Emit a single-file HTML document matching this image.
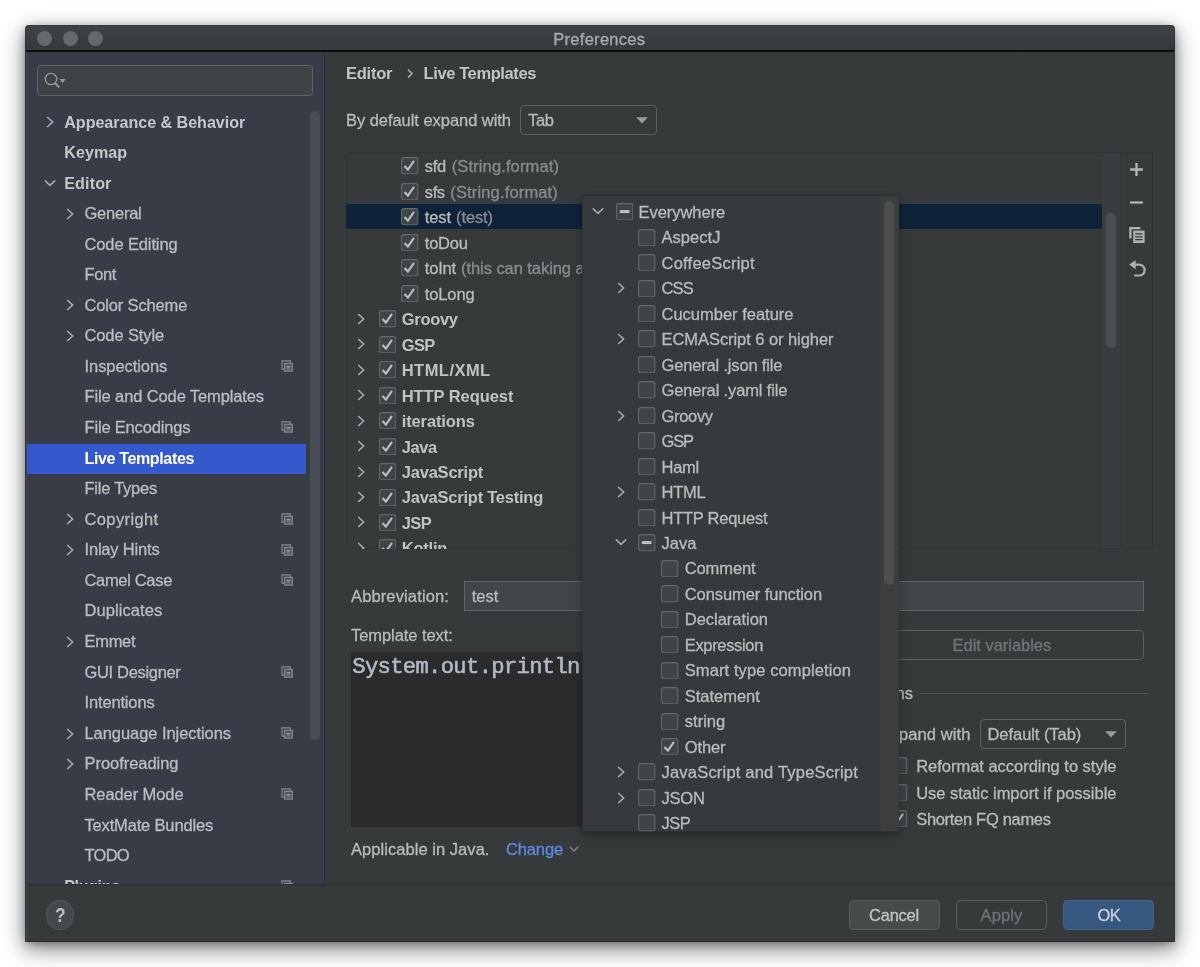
<!DOCTYPE html>
<html lang="en">
<head>
<meta charset="utf-8">
<title>Preferences</title>
<style>
html,body{margin:0;padding:0;background:#ffffff;}
body{width:1200px;height:967px;position:relative;overflow:hidden;font-family:"Liberation Sans",sans-serif;}
.abs{position:absolute;}
.layer{position:absolute;left:0;top:0;width:1200px;height:967px;will-change:transform;}
.t{position:absolute;white-space:pre;font-family:"Liberation Sans",sans-serif;-webkit-text-stroke:0.3px currentColor;}
#win{position:absolute;left:26px;top:26px;width:1148px;height:915px;background:#363a3b;border-radius:3px 3px 0 0;
  box-shadow:0 0 0 1px rgba(10,10,10,.75),0 7px 22px 2px rgba(0,0,0,.46),0 2px 9px rgba(0,0,0,.35);}
#titlebar{position:absolute;left:26px;top:26px;width:1148px;height:25px;background:linear-gradient(#3f4244,#36393b);border-radius:3px 3px 0 0;}
#titleline{position:absolute;left:26px;top:50.4px;width:1148px;height:1.6px;background:#0d0e0f;}
.tl{position:absolute;width:15px;height:15px;border-radius:50%;background:#65696b;top:30.6px;}
#sidebg{position:absolute;left:26px;top:52px;width:298px;height:832px;background:#393c46;}
#sideclip{clip-path:inset(52px 876px 83px 26px);}
#treeclip{clip-path:inset(153px 80px 418.5px 346px);}
#popclip{clip-path:inset(196px 301px 135.5px 583px);}
.field{position:absolute;box-sizing:border-box;border:1px solid #636567;border-radius:4px;}
.btn{position:absolute;box-sizing:border-box;border:1px solid #5e6162;border-radius:4.5px;}
</style>
</head>
<body>
<div id="win"></div>
<div id="titlebar"></div>
<div class="tl" style="left:36.9px"></div><div class="tl" style="left:62.5px"></div><div class="tl" style="left:88.1px"></div>
<div id="titleline"></div>
<div class="layer">
<span class="t" style="left:553.30px;top:28.58px;line-height:21px;font-size:16.5px;color:#a9abad;letter-spacing:0.276px;">Preferences</span></div>

<!-- sidebar -->
<div id="sidebg"></div>
<div class="abs" style="left:26px;top:52px;width:1px;height:889px;background:#55595f;opacity:.55"></div>
<div class="abs" style="left:323.6px;top:52px;width:1.3px;height:832px;background:#2c2f33"></div>
<div class="field" style="left:37px;top:65px;width:276px;height:30.6px;background:#404345;border-color:#5f646b;border-radius:3.5px"></div>
<svg class="abs" style="left:42px;top:70px" width="26" height="20" viewBox="0 0 26 20">
  <circle cx="9" cy="9" r="5.7" fill="none" stroke="#989b9e" stroke-width="1.3"/>
  <path d="M13.1 13.3 L17.2 17.2" stroke="#989b9e" stroke-width="2"/>
  <path d="M17.4 9 h6.4 l-3.2 4.1 z" fill="#989b9e"/>
</svg>
<div class="layer" id="sideclip">
<svg style="position:absolute;left:45.20px;top:114.90px" width="10" height="14" viewBox="0 0 10 14"><path d="M2.2 2 L7.6 7 L2.2 12" fill="none" stroke="#a4a7ab" stroke-width="1.7"/></svg>
<svg style="position:absolute;left:43.20px;top:177.56px" width="14" height="10" viewBox="0 0 14 10"><path d="M1.8 2.4 L7 7.4 L12.2 2.4" fill="none" stroke="#a4a7ab" stroke-width="1.7"/></svg>
<svg style="position:absolute;left:65.40px;top:206.64px" width="10" height="14" viewBox="0 0 10 14"><path d="M2.2 2 L7.6 7 L2.2 12" fill="none" stroke="#a4a7ab" stroke-width="1.7"/></svg>
<svg style="position:absolute;left:65.40px;top:298.38px" width="10" height="14" viewBox="0 0 10 14"><path d="M2.2 2 L7.6 7 L2.2 12" fill="none" stroke="#a4a7ab" stroke-width="1.7"/></svg>
<svg style="position:absolute;left:65.40px;top:328.96px" width="10" height="14" viewBox="0 0 10 14"><path d="M2.2 2 L7.6 7 L2.2 12" fill="none" stroke="#a4a7ab" stroke-width="1.7"/></svg>
<svg style="position:absolute;left:280.70px;top:360.04px" width="13" height="13" viewBox="0 0 13 13"><path d="M9.2 3.2 V0.9 H1 V9.1 H3.3" fill="none" stroke="#878c94" stroke-width="1.15"/><rect x="3.6" y="3.3" width="7.7" height="7.8" fill="#878c94" fill-opacity="0.3" stroke="#878c94" stroke-width="1.2"/><path d="M5.5 6.8 H9.5" stroke="#aeb3ba" stroke-width="1.15"/><path d="M5.8 8.9 H9.2" stroke="#878c94" stroke-width="0.9"/></svg>
<svg style="position:absolute;left:280.70px;top:421.20px" width="13" height="13" viewBox="0 0 13 13"><path d="M9.2 3.2 V0.9 H1 V9.1 H3.3" fill="none" stroke="#878c94" stroke-width="1.15"/><rect x="3.6" y="3.3" width="7.7" height="7.8" fill="#878c94" fill-opacity="0.3" stroke="#878c94" stroke-width="1.2"/><path d="M5.5 6.8 H9.5" stroke="#aeb3ba" stroke-width="1.15"/><path d="M5.8 8.9 H9.2" stroke="#878c94" stroke-width="0.9"/></svg>
<div style="position:absolute;left:27px;top:443.78px;width:279px;height:30.4px;background:#3359cd"></div>
<svg style="position:absolute;left:65.40px;top:512.44px" width="10" height="14" viewBox="0 0 10 14"><path d="M2.2 2 L7.6 7 L2.2 12" fill="none" stroke="#a4a7ab" stroke-width="1.7"/></svg>
<svg style="position:absolute;left:280.70px;top:512.94px" width="13" height="13" viewBox="0 0 13 13"><path d="M9.2 3.2 V0.9 H1 V9.1 H3.3" fill="none" stroke="#878c94" stroke-width="1.15"/><rect x="3.6" y="3.3" width="7.7" height="7.8" fill="#878c94" fill-opacity="0.3" stroke="#878c94" stroke-width="1.2"/><path d="M5.5 6.8 H9.5" stroke="#aeb3ba" stroke-width="1.15"/><path d="M5.8 8.9 H9.2" stroke="#878c94" stroke-width="0.9"/></svg>
<svg style="position:absolute;left:65.40px;top:543.02px" width="10" height="14" viewBox="0 0 10 14"><path d="M2.2 2 L7.6 7 L2.2 12" fill="none" stroke="#a4a7ab" stroke-width="1.7"/></svg>
<svg style="position:absolute;left:280.70px;top:543.52px" width="13" height="13" viewBox="0 0 13 13"><path d="M9.2 3.2 V0.9 H1 V9.1 H3.3" fill="none" stroke="#878c94" stroke-width="1.15"/><rect x="3.6" y="3.3" width="7.7" height="7.8" fill="#878c94" fill-opacity="0.3" stroke="#878c94" stroke-width="1.2"/><path d="M5.5 6.8 H9.5" stroke="#aeb3ba" stroke-width="1.15"/><path d="M5.8 8.9 H9.2" stroke="#878c94" stroke-width="0.9"/></svg>
<svg style="position:absolute;left:280.70px;top:574.10px" width="13" height="13" viewBox="0 0 13 13"><path d="M9.2 3.2 V0.9 H1 V9.1 H3.3" fill="none" stroke="#878c94" stroke-width="1.15"/><rect x="3.6" y="3.3" width="7.7" height="7.8" fill="#878c94" fill-opacity="0.3" stroke="#878c94" stroke-width="1.2"/><path d="M5.5 6.8 H9.5" stroke="#aeb3ba" stroke-width="1.15"/><path d="M5.8 8.9 H9.2" stroke="#878c94" stroke-width="0.9"/></svg>
<svg style="position:absolute;left:65.40px;top:634.76px" width="10" height="14" viewBox="0 0 10 14"><path d="M2.2 2 L7.6 7 L2.2 12" fill="none" stroke="#a4a7ab" stroke-width="1.7"/></svg>
<svg style="position:absolute;left:280.70px;top:665.84px" width="13" height="13" viewBox="0 0 13 13"><path d="M9.2 3.2 V0.9 H1 V9.1 H3.3" fill="none" stroke="#878c94" stroke-width="1.15"/><rect x="3.6" y="3.3" width="7.7" height="7.8" fill="#878c94" fill-opacity="0.3" stroke="#878c94" stroke-width="1.2"/><path d="M5.5 6.8 H9.5" stroke="#aeb3ba" stroke-width="1.15"/><path d="M5.8 8.9 H9.2" stroke="#878c94" stroke-width="0.9"/></svg>
<svg style="position:absolute;left:65.40px;top:726.50px" width="10" height="14" viewBox="0 0 10 14"><path d="M2.2 2 L7.6 7 L2.2 12" fill="none" stroke="#a4a7ab" stroke-width="1.7"/></svg>
<svg style="position:absolute;left:280.70px;top:727.00px" width="13" height="13" viewBox="0 0 13 13"><path d="M9.2 3.2 V0.9 H1 V9.1 H3.3" fill="none" stroke="#878c94" stroke-width="1.15"/><rect x="3.6" y="3.3" width="7.7" height="7.8" fill="#878c94" fill-opacity="0.3" stroke="#878c94" stroke-width="1.2"/><path d="M5.5 6.8 H9.5" stroke="#aeb3ba" stroke-width="1.15"/><path d="M5.8 8.9 H9.2" stroke="#878c94" stroke-width="0.9"/></svg>
<svg style="position:absolute;left:65.40px;top:757.08px" width="10" height="14" viewBox="0 0 10 14"><path d="M2.2 2 L7.6 7 L2.2 12" fill="none" stroke="#a4a7ab" stroke-width="1.7"/></svg>
<svg style="position:absolute;left:280.70px;top:788.16px" width="13" height="13" viewBox="0 0 13 13"><path d="M9.2 3.2 V0.9 H1 V9.1 H3.3" fill="none" stroke="#878c94" stroke-width="1.15"/><rect x="3.6" y="3.3" width="7.7" height="7.8" fill="#878c94" fill-opacity="0.3" stroke="#878c94" stroke-width="1.2"/><path d="M5.5 6.8 H9.5" stroke="#aeb3ba" stroke-width="1.15"/><path d="M5.8 8.9 H9.2" stroke="#878c94" stroke-width="0.9"/></svg>
<svg style="position:absolute;left:280.70px;top:879.90px" width="13" height="13" viewBox="0 0 13 13"><path d="M9.2 3.2 V0.9 H1 V9.1 H3.3" fill="none" stroke="#878c94" stroke-width="1.15"/><rect x="3.6" y="3.3" width="7.7" height="7.8" fill="#878c94" fill-opacity="0.3" stroke="#878c94" stroke-width="1.2"/><path d="M5.5 6.8 H9.5" stroke="#aeb3ba" stroke-width="1.15"/><path d="M5.8 8.9 H9.2" stroke="#878c94" stroke-width="0.9"/></svg>
<span class="t" style="left:64.25px;top:111.72px;line-height:21px;font-size:16.1px;color:#c4c6c9;letter-spacing:-0.028px;font-weight:bold;-webkit-text-stroke:0;">Appearance &amp; Behavior</span>
<span class="t" style="left:64.25px;top:142.30px;line-height:21px;font-size:16.1px;color:#c4c6c9;letter-spacing:0.062px;font-weight:bold;-webkit-text-stroke:0;">Keymap</span>
<span class="t" style="left:64.25px;top:172.88px;line-height:21px;font-size:16.1px;color:#c4c6c9;letter-spacing:0.125px;font-weight:bold;-webkit-text-stroke:0;">Editor</span>
<span class="t" style="left:84.50px;top:202.92px;line-height:21px;font-size:16.5px;color:#bbbdc0;letter-spacing:-0.243px;">General</span>
<span class="t" style="left:84.50px;top:233.50px;line-height:21px;font-size:16.5px;color:#bbbdc0;letter-spacing:-0.124px;">Code Editing</span>
<span class="t" style="left:84.50px;top:264.08px;line-height:21px;font-size:16.5px;color:#bbbdc0;letter-spacing:-0.383px;">Font</span>
<span class="t" style="left:84.50px;top:294.66px;line-height:21px;font-size:16.5px;color:#bbbdc0;letter-spacing:-0.150px;">Color Scheme</span>
<span class="t" style="left:84.50px;top:325.24px;line-height:21px;font-size:16.5px;color:#bbbdc0;letter-spacing:-0.122px;">Code Style</span>
<span class="t" style="left:84.50px;top:355.82px;line-height:21px;font-size:16.5px;color:#bbbdc0;letter-spacing:-0.065px;">Inspections</span>
<span class="t" style="left:84.50px;top:386.40px;line-height:21px;font-size:16.5px;color:#bbbdc0;letter-spacing:-0.118px;">File and Code Templates</span>
<span class="t" style="left:84.50px;top:416.98px;line-height:21px;font-size:16.5px;color:#bbbdc0;letter-spacing:-0.177px;">File Encodings</span>
<span class="t" style="left:84.50px;top:448.10px;line-height:21px;font-size:16.1px;color:#ffffff;letter-spacing:-0.400px;font-weight:bold;-webkit-text-stroke:0;">Live Templates</span>
<span class="t" style="left:84.50px;top:478.14px;line-height:21px;font-size:16.5px;color:#bbbdc0;letter-spacing:-0.241px;">File Types</span>
<span class="t" style="left:84.50px;top:508.72px;line-height:21px;font-size:16.5px;color:#bbbdc0;letter-spacing:0.375px;">Copyright</span>
<span class="t" style="left:84.50px;top:539.30px;line-height:21px;font-size:16.5px;color:#bbbdc0;letter-spacing:-0.185px;">Inlay Hints</span>
<span class="t" style="left:84.50px;top:569.88px;line-height:21px;font-size:16.5px;color:#bbbdc0;letter-spacing:-0.330px;">Camel Case</span>
<span class="t" style="left:84.50px;top:600.46px;line-height:21px;font-size:16.5px;color:#bbbdc0;letter-spacing:0.070px;">Duplicates</span>
<span class="t" style="left:84.50px;top:631.04px;line-height:21px;font-size:16.5px;color:#bbbdc0;letter-spacing:-0.303px;">Emmet</span>
<span class="t" style="left:84.50px;top:661.62px;line-height:21px;font-size:16.5px;color:#bbbdc0;letter-spacing:-0.329px;">GUI Designer</span>
<span class="t" style="left:84.50px;top:692.20px;line-height:21px;font-size:16.5px;color:#bbbdc0;letter-spacing:-0.156px;">Intentions</span>
<span class="t" style="left:84.50px;top:722.78px;line-height:21px;font-size:16.5px;color:#bbbdc0;letter-spacing:-0.063px;">Language Injections</span>
<span class="t" style="left:84.50px;top:753.36px;line-height:21px;font-size:16.5px;color:#bbbdc0;letter-spacing:-0.040px;">Proofreading</span>
<span class="t" style="left:84.50px;top:783.94px;line-height:21px;font-size:16.5px;color:#bbbdc0;letter-spacing:-0.089px;">Reader Mode</span>
<span class="t" style="left:84.50px;top:814.52px;line-height:21px;font-size:16.5px;color:#bbbdc0;letter-spacing:-0.166px;">TextMate Bundles</span>
<span class="t" style="left:84.50px;top:845.10px;line-height:21px;font-size:16.5px;color:#bbbdc0;letter-spacing:-0.719px;">TODO</span>
<span class="t" style="left:64.25px;top:876.22px;line-height:21px;font-size:16.1px;color:#c4c6c9;letter-spacing:-0.375px;font-weight:bold;-webkit-text-stroke:0;">Plugins</span>
</div>
<div class="abs" style="left:309.5px;top:111px;width:10.5px;height:628.5px;border-radius:5px;background:#494d56"></div>

<!-- main -->
<svg class="abs" style="left:404px;top:66px" width="12" height="16" viewBox="0 0 12 16"><path d="M4 3.6 L8 7.6 L4 11.6" fill="none" stroke="#a4a7ab" stroke-width="1.5"/></svg>
<div class="field" style="left:520px;top:105px;width:136.7px;height:29.7px;border-color:#5e6162"></div>
<svg class="abs" style="left:636.4px;top:117.4px" width="12" height="7" viewBox="0 0 12 7"><path d="M0.2 0.2 H11.8 L6 6.6 Z" fill="#9a9da0"/></svg>

<!-- tree table -->
<div class="abs" style="left:345.5px;top:152.3px;width:807.4px;height:396.7px;box-sizing:border-box;border:1px solid #313335"></div>
<div class="abs" style="left:1102px;top:153.3px;width:18px;height:394.7px;background:#3a3d3f"></div>
<div class="layer" id="treeclip">
<svg style="position:absolute;left:401.40px;top:157.40px" width="17.4" height="17.4" viewBox="0 0 17.4 17.4"><rect x="0.6" y="0.6" width="16.2" height="16.2" rx="2.2" fill="#3f4446" stroke="#656869" stroke-width="1.1"/><path d="M3.5 8.9 L6.9 12.5 L13 3.8" fill="none" stroke="#bcbfbf" stroke-width="2.15"/></svg>
<svg style="position:absolute;left:401.40px;top:182.87px" width="17.4" height="17.4" viewBox="0 0 17.4 17.4"><rect x="0.6" y="0.6" width="16.2" height="16.2" rx="2.2" fill="#3f4446" stroke="#656869" stroke-width="1.1"/><path d="M3.5 8.9 L6.9 12.5 L13 3.8" fill="none" stroke="#bcbfbf" stroke-width="2.15"/></svg>
<div style="position:absolute;left:346px;top:203.94px;width:756px;height:25.2px;background:#0e2239"></div>
<svg style="position:absolute;left:401.40px;top:208.34px" width="17.4" height="17.4" viewBox="0 0 17.4 17.4"><rect x="0.6" y="0.6" width="16.2" height="16.2" rx="2.2" fill="#3f4446" stroke="#656869" stroke-width="1.1"/><path d="M3.5 8.9 L6.9 12.5 L13 3.8" fill="none" stroke="#bcbfbf" stroke-width="2.15"/></svg>
<svg style="position:absolute;left:401.40px;top:233.81px" width="17.4" height="17.4" viewBox="0 0 17.4 17.4"><rect x="0.6" y="0.6" width="16.2" height="16.2" rx="2.2" fill="#3f4446" stroke="#656869" stroke-width="1.1"/><path d="M3.5 8.9 L6.9 12.5 L13 3.8" fill="none" stroke="#bcbfbf" stroke-width="2.15"/></svg>
<svg style="position:absolute;left:401.40px;top:259.28px" width="17.4" height="17.4" viewBox="0 0 17.4 17.4"><rect x="0.6" y="0.6" width="16.2" height="16.2" rx="2.2" fill="#3f4446" stroke="#656869" stroke-width="1.1"/><path d="M3.5 8.9 L6.9 12.5 L13 3.8" fill="none" stroke="#bcbfbf" stroke-width="2.15"/></svg>
<svg style="position:absolute;left:401.40px;top:284.75px" width="17.4" height="17.4" viewBox="0 0 17.4 17.4"><rect x="0.6" y="0.6" width="16.2" height="16.2" rx="2.2" fill="#3f4446" stroke="#656869" stroke-width="1.1"/><path d="M3.5 8.9 L6.9 12.5 L13 3.8" fill="none" stroke="#bcbfbf" stroke-width="2.15"/></svg>
<svg style="position:absolute;left:356.00px;top:311.72px" width="10" height="14" viewBox="0 0 10 14"><path d="M2.2 2 L7.6 7 L2.2 12" fill="none" stroke="#a4a7ab" stroke-width="1.7"/></svg>
<svg style="position:absolute;left:378.50px;top:310.22px" width="17.4" height="17.4" viewBox="0 0 17.4 17.4"><rect x="0.6" y="0.6" width="16.2" height="16.2" rx="2.2" fill="#3f4446" stroke="#656869" stroke-width="1.1"/><path d="M3.5 8.9 L6.9 12.5 L13 3.8" fill="none" stroke="#bcbfbf" stroke-width="2.15"/></svg>
<svg style="position:absolute;left:356.00px;top:337.19px" width="10" height="14" viewBox="0 0 10 14"><path d="M2.2 2 L7.6 7 L2.2 12" fill="none" stroke="#a4a7ab" stroke-width="1.7"/></svg>
<svg style="position:absolute;left:378.50px;top:335.69px" width="17.4" height="17.4" viewBox="0 0 17.4 17.4"><rect x="0.6" y="0.6" width="16.2" height="16.2" rx="2.2" fill="#3f4446" stroke="#656869" stroke-width="1.1"/><path d="M3.5 8.9 L6.9 12.5 L13 3.8" fill="none" stroke="#bcbfbf" stroke-width="2.15"/></svg>
<svg style="position:absolute;left:356.00px;top:362.66px" width="10" height="14" viewBox="0 0 10 14"><path d="M2.2 2 L7.6 7 L2.2 12" fill="none" stroke="#a4a7ab" stroke-width="1.7"/></svg>
<svg style="position:absolute;left:378.50px;top:361.16px" width="17.4" height="17.4" viewBox="0 0 17.4 17.4"><rect x="0.6" y="0.6" width="16.2" height="16.2" rx="2.2" fill="#3f4446" stroke="#656869" stroke-width="1.1"/><path d="M3.5 8.9 L6.9 12.5 L13 3.8" fill="none" stroke="#bcbfbf" stroke-width="2.15"/></svg>
<svg style="position:absolute;left:356.00px;top:388.13px" width="10" height="14" viewBox="0 0 10 14"><path d="M2.2 2 L7.6 7 L2.2 12" fill="none" stroke="#a4a7ab" stroke-width="1.7"/></svg>
<svg style="position:absolute;left:378.50px;top:386.63px" width="17.4" height="17.4" viewBox="0 0 17.4 17.4"><rect x="0.6" y="0.6" width="16.2" height="16.2" rx="2.2" fill="#3f4446" stroke="#656869" stroke-width="1.1"/><path d="M3.5 8.9 L6.9 12.5 L13 3.8" fill="none" stroke="#bcbfbf" stroke-width="2.15"/></svg>
<svg style="position:absolute;left:356.00px;top:413.60px" width="10" height="14" viewBox="0 0 10 14"><path d="M2.2 2 L7.6 7 L2.2 12" fill="none" stroke="#a4a7ab" stroke-width="1.7"/></svg>
<svg style="position:absolute;left:378.50px;top:412.10px" width="17.4" height="17.4" viewBox="0 0 17.4 17.4"><rect x="0.6" y="0.6" width="16.2" height="16.2" rx="2.2" fill="#3f4446" stroke="#656869" stroke-width="1.1"/><path d="M3.5 8.9 L6.9 12.5 L13 3.8" fill="none" stroke="#bcbfbf" stroke-width="2.15"/></svg>
<svg style="position:absolute;left:356.00px;top:439.07px" width="10" height="14" viewBox="0 0 10 14"><path d="M2.2 2 L7.6 7 L2.2 12" fill="none" stroke="#a4a7ab" stroke-width="1.7"/></svg>
<svg style="position:absolute;left:378.50px;top:437.57px" width="17.4" height="17.4" viewBox="0 0 17.4 17.4"><rect x="0.6" y="0.6" width="16.2" height="16.2" rx="2.2" fill="#3f4446" stroke="#656869" stroke-width="1.1"/><path d="M3.5 8.9 L6.9 12.5 L13 3.8" fill="none" stroke="#bcbfbf" stroke-width="2.15"/></svg>
<svg style="position:absolute;left:356.00px;top:464.54px" width="10" height="14" viewBox="0 0 10 14"><path d="M2.2 2 L7.6 7 L2.2 12" fill="none" stroke="#a4a7ab" stroke-width="1.7"/></svg>
<svg style="position:absolute;left:378.50px;top:463.04px" width="17.4" height="17.4" viewBox="0 0 17.4 17.4"><rect x="0.6" y="0.6" width="16.2" height="16.2" rx="2.2" fill="#3f4446" stroke="#656869" stroke-width="1.1"/><path d="M3.5 8.9 L6.9 12.5 L13 3.8" fill="none" stroke="#bcbfbf" stroke-width="2.15"/></svg>
<svg style="position:absolute;left:356.00px;top:490.01px" width="10" height="14" viewBox="0 0 10 14"><path d="M2.2 2 L7.6 7 L2.2 12" fill="none" stroke="#a4a7ab" stroke-width="1.7"/></svg>
<svg style="position:absolute;left:378.50px;top:488.51px" width="17.4" height="17.4" viewBox="0 0 17.4 17.4"><rect x="0.6" y="0.6" width="16.2" height="16.2" rx="2.2" fill="#3f4446" stroke="#656869" stroke-width="1.1"/><path d="M3.5 8.9 L6.9 12.5 L13 3.8" fill="none" stroke="#bcbfbf" stroke-width="2.15"/></svg>
<svg style="position:absolute;left:356.00px;top:515.48px" width="10" height="14" viewBox="0 0 10 14"><path d="M2.2 2 L7.6 7 L2.2 12" fill="none" stroke="#a4a7ab" stroke-width="1.7"/></svg>
<svg style="position:absolute;left:378.50px;top:513.98px" width="17.4" height="17.4" viewBox="0 0 17.4 17.4"><rect x="0.6" y="0.6" width="16.2" height="16.2" rx="2.2" fill="#3f4446" stroke="#656869" stroke-width="1.1"/><path d="M3.5 8.9 L6.9 12.5 L13 3.8" fill="none" stroke="#bcbfbf" stroke-width="2.15"/></svg>
<svg style="position:absolute;left:356.00px;top:540.95px" width="10" height="14" viewBox="0 0 10 14"><path d="M2.2 2 L7.6 7 L2.2 12" fill="none" stroke="#a4a7ab" stroke-width="1.7"/></svg>
<svg style="position:absolute;left:378.50px;top:539.45px" width="17.4" height="17.4" viewBox="0 0 17.4 17.4"><rect x="0.6" y="0.6" width="16.2" height="16.2" rx="2.2" fill="#3f4446" stroke="#656869" stroke-width="1.1"/><path d="M3.5 8.9 L6.9 12.5 L13 3.8" fill="none" stroke="#bcbfbf" stroke-width="2.15"/></svg>
<span class="t" style="left:424.75px;top:156.38px;line-height:21px;font-size:16.5px;color:#bbbbbb;letter-spacing:-0.255px;">sfd</span>
<span class="t" style="left:451.75px;top:156.38px;line-height:21px;font-size:16.5px;color:#8a8c8e;letter-spacing:0.121px;">(String.format)</span>
<span class="t" style="left:424.75px;top:181.85px;line-height:21px;font-size:16.5px;color:#bbbbbb;letter-spacing:-0.365px;">sfs</span>
<span class="t" style="left:450.25px;top:181.85px;line-height:21px;font-size:16.5px;color:#8a8c8e;letter-spacing:0.154px;">(String.format)</span>
<span class="t" style="left:424.75px;top:207.32px;line-height:21px;font-size:16.5px;color:#bbbbbb;letter-spacing:-0.090px;">test</span>
<span class="t" style="left:456.00px;top:207.32px;line-height:21px;font-size:16.5px;color:#8a8c8e;letter-spacing:-0.099px;">(test)</span>
<span class="t" style="left:424.75px;top:232.79px;line-height:21px;font-size:16.5px;color:#bbbbbb;letter-spacing:-0.206px;">toDou</span>
<span class="t" style="left:424.75px;top:258.26px;line-height:21px;font-size:16.5px;color:#bbbbbb;letter-spacing:-0.172px;">toInt</span>
<span class="t" style="left:461.00px;top:258.26px;line-height:21px;font-size:16.5px;color:#8a8c8e;letter-spacing:-0.062px;">(this can taking a parameter)</span>
<span class="t" style="left:424.75px;top:283.73px;line-height:21px;font-size:16.5px;color:#bbbbbb;letter-spacing:-0.111px;">toLong</span>
<span class="t" style="left:401.75px;top:309.20px;line-height:21px;font-size:16.5px;color:#c2c2c2;letter-spacing:-0.297px;font-weight:bold;-webkit-text-stroke:0;">Groovy</span>
<span class="t" style="left:401.75px;top:334.67px;line-height:21px;font-size:16.5px;color:#c2c2c2;letter-spacing:-0.620px;font-weight:bold;-webkit-text-stroke:0;">GSP</span>
<span class="t" style="left:401.75px;top:360.14px;line-height:21px;font-size:16.5px;color:#c2c2c2;letter-spacing:0.458px;font-weight:bold;-webkit-text-stroke:0;">HTML/XML</span>
<span class="t" style="left:401.75px;top:385.61px;line-height:21px;font-size:16.5px;color:#c2c2c2;letter-spacing:-0.072px;font-weight:bold;-webkit-text-stroke:0;">HTTP Request</span>
<span class="t" style="left:401.75px;top:411.08px;line-height:21px;font-size:16.5px;color:#c2c2c2;letter-spacing:-0.128px;font-weight:bold;-webkit-text-stroke:0;">iterations</span>
<span class="t" style="left:401.75px;top:436.55px;line-height:21px;font-size:16.5px;color:#c2c2c2;letter-spacing:-0.405px;font-weight:bold;-webkit-text-stroke:0;">Java</span>
<span class="t" style="left:401.75px;top:462.02px;line-height:21px;font-size:16.5px;color:#c2c2c2;letter-spacing:-0.217px;font-weight:bold;-webkit-text-stroke:0;">JavaScript</span>
<span class="t" style="left:401.75px;top:487.49px;line-height:21px;font-size:16.5px;color:#c2c2c2;letter-spacing:-0.233px;font-weight:bold;-webkit-text-stroke:0;">JavaScript Testing</span>
<span class="t" style="left:401.75px;top:512.96px;line-height:21px;font-size:16.5px;color:#c2c2c2;letter-spacing:-0.562px;font-weight:bold;-webkit-text-stroke:0;">JSP</span>
<span class="t" style="left:401.75px;top:538.43px;line-height:21px;font-size:16.5px;color:#c2c2c2;letter-spacing:-0.208px;font-weight:bold;-webkit-text-stroke:0;">Kotlin</span>
</div>
<div class="abs" style="left:1120px;top:153px;width:1px;height:395.5px;background:#323435"></div>
<div class="abs" style="left:1106px;top:212.5px;width:10px;height:135px;border-radius:5px;background:#4d4e50"></div>
<!-- toolbar icons -->
<svg class="abs" style="left:1128px;top:161px" width="17" height="17" viewBox="0 0 17 17"><path d="M8.5 2.1 V14.9 M2.1 8.5 H14.9" stroke="#b4b6b8" stroke-width="2.3"/></svg>
<svg class="abs" style="left:1128px;top:194px" width="17" height="17" viewBox="0 0 17 17"><path d="M2.1 8.5 H14.9" stroke="#b4b6b8" stroke-width="2.3"/></svg>
<svg class="abs" style="left:1127.5px;top:226px" width="19" height="19" viewBox="0 0 19 19">
  <path d="M2.4 12.6 V2.1 H12.4" fill="none" stroke="#afb1b3" stroke-width="2.3"/>
  <rect x="5.2" y="4.6" width="11.4" height="12.4" fill="#afb1b3"/>
  <path d="M7.2 7.9 H14.6 M7.2 10.8 H14.6 M7.2 13.7 H14.6" stroke="#363a3b" stroke-width="1.3"/>
</svg>
<svg class="abs" style="left:1127.5px;top:260px" width="20" height="20" viewBox="0 0 20 20">
  <path d="M6.5 4.6 H11.2 A5.45 5.45 0 0 1 11.2 15.5 H6.2" fill="none" stroke="#afb1b3" stroke-width="2.2"/>
  <path d="M7.6 0.2 L1.2 4.6 L7.6 9.2 Z" fill="#afb1b3"/>
</svg>

<!-- lower form -->
<div class="field" style="left:464px;top:581.2px;width:679.8px;height:30px;background:#424648;border-radius:0;border-color:#606365"></div>
<div class="abs" style="left:350.5px;top:651.7px;width:497px;height:175.8px;background:#2b2b2b"></div>
<div class="btn" style="left:860px;top:630px;width:283.8px;height:29.6px"></div>
<div class="abs" style="left:920px;top:693.4px;width:227.5px;height:1px;background:#4f5254"></div>
<div class="field" style="left:980px;top:718.7px;width:145.5px;height:30.2px;border-color:#5e6162"></div>
<svg class="abs" style="left:1105px;top:731.2px" width="12" height="7" viewBox="0 0 12 7"><path d="M0.2 0.2 H11.8 L6 6.6 Z" fill="#9a9da0"/></svg>
<svg style="position:absolute;left:890.20px;top:757.10px" width="17.4" height="17.4" viewBox="0 0 17.4 17.4"><rect x="0.6" y="0.6" width="16.2" height="16.2" rx="2.2" fill="#3f4446" stroke="#656869" stroke-width="1.1"/></svg><svg style="position:absolute;left:890.20px;top:783.70px" width="17.4" height="17.4" viewBox="0 0 17.4 17.4"><rect x="0.6" y="0.6" width="16.2" height="16.2" rx="2.2" fill="#3f4446" stroke="#656869" stroke-width="1.1"/></svg><svg style="position:absolute;left:890.20px;top:810.10px" width="17.4" height="17.4" viewBox="0 0 17.4 17.4"><rect x="0.6" y="0.6" width="16.2" height="16.2" rx="2.2" fill="#3f4446" stroke="#656869" stroke-width="1.1"/><path d="M3.5 8.9 L6.9 12.5 L13 3.8" fill="none" stroke="#bcbfbf" stroke-width="2.15"/></svg>
<svg class="abs" style="left:566.5px;top:844px" width="14" height="10" viewBox="0 0 14 10"><path d="M2.8 2.8 L7 7 L11.2 2.8" fill="none" stroke="#7c828c" stroke-width="1.5"/></svg>

<!-- footer -->
<div class="abs" style="left:27px;top:884px;width:1147px;height:57px;background:#363a3b"></div>
<div class="abs" style="left:27px;top:884px;width:1147px;height:1.2px;background:#2c2f30"></div>
<div class="abs" style="left:45.8px;top:900.2px;width:28.4px;height:29.6px;border-radius:50%;background:#46494b;box-sizing:border-box;border:1px solid #54575a"></div>
<span class="t" style="left:54.7px;top:901.8px;line-height:26px;font-size:20px;font-weight:bold;color:#c2c2c2;-webkit-text-stroke:0;transform:scaleX(.86);transform-origin:0 0;will-change:transform">?</span>
<div class="btn" style="left:848.5px;top:900px;width:91px;height:29.6px;background:#464a4b;border-color:#5a5d5f"></div>
<div class="btn" style="left:955.5px;top:900px;width:91.2px;height:29.6px;border-color:#5a5d5f"></div>
<div class="btn" style="left:1062.5px;top:900px;width:91.5px;height:29.6px;background:#365880;border-color:#43638c"></div>
<div class="layer">
<span class="t" style="left:346.00px;top:63.48px;line-height:21px;font-size:16.5px;color:#c4c4c4;letter-spacing:-0.237px;font-weight:bold;-webkit-text-stroke:0;">Editor</span>
<span class="t" style="left:423.50px;top:63.48px;line-height:21px;font-size:16.5px;color:#c4c4c4;letter-spacing:-0.393px;font-weight:bold;-webkit-text-stroke:0;">Live Templates</span>
<span class="t" style="left:346.00px;top:110.48px;line-height:21px;font-size:16.5px;color:#bbbbbb;letter-spacing:-0.047px;">By default expand with</span>
<span class="t" style="left:528.00px;top:110.48px;line-height:21px;font-size:16.5px;color:#bbbbbb;letter-spacing:-0.370px;">Tab</span>
<span class="t" style="left:351.00px;top:586.08px;line-height:21px;font-size:16.5px;color:#bbbbbb;letter-spacing:0.130px;">Abbreviation:</span>
<span class="t" style="left:471.75px;top:586.08px;line-height:21px;font-size:16.5px;color:#bbbbbb;letter-spacing:0.035px;">test</span>
<span class="t" style="left:351.00px;top:625.38px;line-height:21px;font-size:16.5px;color:#bbbbbb;letter-spacing:-0.069px;">Template text:</span>
<span class="t" style="left:352.25px;top:653.49px;line-height:29px;font-size:22.2px;color:#b2bbc8;letter-spacing:-0.676px;font-family:'Liberation Mono', monospace;-webkit-text-stroke:0.55px currentColor;">System.out.println</span>
<span class="t" style="left:952.50px;top:634.98px;line-height:21px;font-size:16.5px;color:#737678;letter-spacing:-0.022px;">Edit variables</span>
<span class="t" style="left:855.50px;top:683.23px;line-height:21px;font-size:16.5px;color:#bbbbbb;letter-spacing:0.125px;">Options</span>
<span class="t" style="left:879.50px;top:724.48px;line-height:21px;font-size:16.5px;color:#bbbbbb;letter-spacing:0.101px;">Expand with</span>
<span class="t" style="left:987.50px;top:724.48px;line-height:21px;font-size:16.5px;color:#bbbbbb;letter-spacing:-0.055px;">Default (Tab)</span>
<span class="t" style="left:916.20px;top:756.18px;line-height:21px;font-size:16.5px;color:#bbbbbb;letter-spacing:-0.022px;">Reformat according to style</span>
<span class="t" style="left:916.20px;top:782.78px;line-height:21px;font-size:16.5px;color:#bbbbbb;letter-spacing:-0.020px;">Use static import if possible</span>
<span class="t" style="left:916.20px;top:809.28px;line-height:21px;font-size:16.5px;color:#bbbbbb;letter-spacing:-0.307px;">Shorten FQ names</span>
<span class="t" style="left:351.00px;top:838.78px;line-height:21px;font-size:16.5px;color:#bbbbbb;letter-spacing:0.048px;">Applicable in Java.</span>
<span class="t" style="left:506.00px;top:838.78px;line-height:21px;font-size:16.5px;color:#5b8be0;letter-spacing:-0.135px;">Change</span>
<span class="t" style="left:869.00px;top:904.78px;line-height:21px;font-size:16.5px;color:#c4c4c4;letter-spacing:-0.229px;">Cancel</span>
<span class="t" style="left:980.50px;top:904.78px;line-height:21px;font-size:16.5px;color:#707375;letter-spacing:0.144px;">Apply</span>
<span class="t" style="left:1097.50px;top:904.78px;line-height:21px;font-size:16.5px;color:#c9d2dc;letter-spacing:-0.672px;">OK</span></div>

<!-- popup -->
<div class="abs" style="left:582.2px;top:195px;width:317.3px;height:637px;background:#373a3c;box-sizing:border-box;border:1px solid #2d3031;box-shadow:0 3px 10px rgba(0,0,0,.35)"></div>
<div class="layer" id="popclip">
<svg style="position:absolute;left:615.50px;top:203.10px" width="17.4" height="17.4" viewBox="0 0 17.4 17.4"><rect x="0.6" y="0.6" width="16.2" height="16.2" rx="2.2" fill="#3f4446" stroke="#656869" stroke-width="1.1"/><path d="M3.9 8.6 H13.5" fill="none" stroke="#c0c2c2" stroke-width="3"/></svg>
<svg style="position:absolute;left:591.00px;top:205.70px" width="14" height="10" viewBox="0 0 14 10"><path d="M1.8 2.4 L7 7.4 L12.2 2.4" fill="none" stroke="#a4a7ab" stroke-width="1.7"/></svg>
<svg style="position:absolute;left:638.30px;top:228.57px" width="17.4" height="17.4" viewBox="0 0 17.4 17.4"><rect x="0.6" y="0.6" width="16.2" height="16.2" rx="2.2" fill="#3f4446" stroke="#656869" stroke-width="1.1"/></svg>
<svg style="position:absolute;left:638.30px;top:254.04px" width="17.4" height="17.4" viewBox="0 0 17.4 17.4"><rect x="0.6" y="0.6" width="16.2" height="16.2" rx="2.2" fill="#3f4446" stroke="#656869" stroke-width="1.1"/></svg>
<svg style="position:absolute;left:638.30px;top:279.51px" width="17.4" height="17.4" viewBox="0 0 17.4 17.4"><rect x="0.6" y="0.6" width="16.2" height="16.2" rx="2.2" fill="#3f4446" stroke="#656869" stroke-width="1.1"/></svg>
<svg style="position:absolute;left:615.60px;top:281.21px" width="10" height="14" viewBox="0 0 10 14"><path d="M2.2 2 L7.6 7 L2.2 12" fill="none" stroke="#a4a7ab" stroke-width="1.7"/></svg>
<svg style="position:absolute;left:638.30px;top:304.98px" width="17.4" height="17.4" viewBox="0 0 17.4 17.4"><rect x="0.6" y="0.6" width="16.2" height="16.2" rx="2.2" fill="#3f4446" stroke="#656869" stroke-width="1.1"/></svg>
<svg style="position:absolute;left:638.30px;top:330.45px" width="17.4" height="17.4" viewBox="0 0 17.4 17.4"><rect x="0.6" y="0.6" width="16.2" height="16.2" rx="2.2" fill="#3f4446" stroke="#656869" stroke-width="1.1"/></svg>
<svg style="position:absolute;left:615.60px;top:332.15px" width="10" height="14" viewBox="0 0 10 14"><path d="M2.2 2 L7.6 7 L2.2 12" fill="none" stroke="#a4a7ab" stroke-width="1.7"/></svg>
<svg style="position:absolute;left:638.30px;top:355.92px" width="17.4" height="17.4" viewBox="0 0 17.4 17.4"><rect x="0.6" y="0.6" width="16.2" height="16.2" rx="2.2" fill="#3f4446" stroke="#656869" stroke-width="1.1"/></svg>
<svg style="position:absolute;left:638.30px;top:381.39px" width="17.4" height="17.4" viewBox="0 0 17.4 17.4"><rect x="0.6" y="0.6" width="16.2" height="16.2" rx="2.2" fill="#3f4446" stroke="#656869" stroke-width="1.1"/></svg>
<svg style="position:absolute;left:638.30px;top:406.86px" width="17.4" height="17.4" viewBox="0 0 17.4 17.4"><rect x="0.6" y="0.6" width="16.2" height="16.2" rx="2.2" fill="#3f4446" stroke="#656869" stroke-width="1.1"/></svg>
<svg style="position:absolute;left:615.60px;top:408.56px" width="10" height="14" viewBox="0 0 10 14"><path d="M2.2 2 L7.6 7 L2.2 12" fill="none" stroke="#a4a7ab" stroke-width="1.7"/></svg>
<svg style="position:absolute;left:638.30px;top:432.33px" width="17.4" height="17.4" viewBox="0 0 17.4 17.4"><rect x="0.6" y="0.6" width="16.2" height="16.2" rx="2.2" fill="#3f4446" stroke="#656869" stroke-width="1.1"/></svg>
<svg style="position:absolute;left:638.30px;top:457.80px" width="17.4" height="17.4" viewBox="0 0 17.4 17.4"><rect x="0.6" y="0.6" width="16.2" height="16.2" rx="2.2" fill="#3f4446" stroke="#656869" stroke-width="1.1"/></svg>
<svg style="position:absolute;left:638.30px;top:483.27px" width="17.4" height="17.4" viewBox="0 0 17.4 17.4"><rect x="0.6" y="0.6" width="16.2" height="16.2" rx="2.2" fill="#3f4446" stroke="#656869" stroke-width="1.1"/></svg>
<svg style="position:absolute;left:615.60px;top:484.97px" width="10" height="14" viewBox="0 0 10 14"><path d="M2.2 2 L7.6 7 L2.2 12" fill="none" stroke="#a4a7ab" stroke-width="1.7"/></svg>
<svg style="position:absolute;left:638.30px;top:508.74px" width="17.4" height="17.4" viewBox="0 0 17.4 17.4"><rect x="0.6" y="0.6" width="16.2" height="16.2" rx="2.2" fill="#3f4446" stroke="#656869" stroke-width="1.1"/></svg>
<svg style="position:absolute;left:638.30px;top:534.21px" width="17.4" height="17.4" viewBox="0 0 17.4 17.4"><rect x="0.6" y="0.6" width="16.2" height="16.2" rx="2.2" fill="#3f4446" stroke="#656869" stroke-width="1.1"/><path d="M3.9 8.6 H13.5" fill="none" stroke="#c0c2c2" stroke-width="3"/></svg>
<svg style="position:absolute;left:614.40px;top:536.81px" width="14" height="10" viewBox="0 0 14 10"><path d="M1.8 2.4 L7 7.4 L12.2 2.4" fill="none" stroke="#a4a7ab" stroke-width="1.7"/></svg>
<svg style="position:absolute;left:661.20px;top:559.68px" width="17.4" height="17.4" viewBox="0 0 17.4 17.4"><rect x="0.6" y="0.6" width="16.2" height="16.2" rx="2.2" fill="#3f4446" stroke="#656869" stroke-width="1.1"/></svg>
<svg style="position:absolute;left:661.20px;top:585.15px" width="17.4" height="17.4" viewBox="0 0 17.4 17.4"><rect x="0.6" y="0.6" width="16.2" height="16.2" rx="2.2" fill="#3f4446" stroke="#656869" stroke-width="1.1"/></svg>
<svg style="position:absolute;left:661.20px;top:610.62px" width="17.4" height="17.4" viewBox="0 0 17.4 17.4"><rect x="0.6" y="0.6" width="16.2" height="16.2" rx="2.2" fill="#3f4446" stroke="#656869" stroke-width="1.1"/></svg>
<svg style="position:absolute;left:661.20px;top:636.09px" width="17.4" height="17.4" viewBox="0 0 17.4 17.4"><rect x="0.6" y="0.6" width="16.2" height="16.2" rx="2.2" fill="#3f4446" stroke="#656869" stroke-width="1.1"/></svg>
<svg style="position:absolute;left:661.20px;top:661.56px" width="17.4" height="17.4" viewBox="0 0 17.4 17.4"><rect x="0.6" y="0.6" width="16.2" height="16.2" rx="2.2" fill="#3f4446" stroke="#656869" stroke-width="1.1"/></svg>
<svg style="position:absolute;left:661.20px;top:687.03px" width="17.4" height="17.4" viewBox="0 0 17.4 17.4"><rect x="0.6" y="0.6" width="16.2" height="16.2" rx="2.2" fill="#3f4446" stroke="#656869" stroke-width="1.1"/></svg>
<svg style="position:absolute;left:661.20px;top:712.50px" width="17.4" height="17.4" viewBox="0 0 17.4 17.4"><rect x="0.6" y="0.6" width="16.2" height="16.2" rx="2.2" fill="#3f4446" stroke="#656869" stroke-width="1.1"/></svg>
<svg style="position:absolute;left:661.20px;top:737.97px" width="17.4" height="17.4" viewBox="0 0 17.4 17.4"><rect x="0.6" y="0.6" width="16.2" height="16.2" rx="2.2" fill="#3f4446" stroke="#656869" stroke-width="1.1"/><path d="M3.5 8.9 L6.9 12.5 L13 3.8" fill="none" stroke="#bcbfbf" stroke-width="2.15"/></svg>
<svg style="position:absolute;left:638.30px;top:763.44px" width="17.4" height="17.4" viewBox="0 0 17.4 17.4"><rect x="0.6" y="0.6" width="16.2" height="16.2" rx="2.2" fill="#3f4446" stroke="#656869" stroke-width="1.1"/></svg>
<svg style="position:absolute;left:615.60px;top:765.14px" width="10" height="14" viewBox="0 0 10 14"><path d="M2.2 2 L7.6 7 L2.2 12" fill="none" stroke="#a4a7ab" stroke-width="1.7"/></svg>
<svg style="position:absolute;left:638.30px;top:788.91px" width="17.4" height="17.4" viewBox="0 0 17.4 17.4"><rect x="0.6" y="0.6" width="16.2" height="16.2" rx="2.2" fill="#3f4446" stroke="#656869" stroke-width="1.1"/></svg>
<svg style="position:absolute;left:615.60px;top:790.61px" width="10" height="14" viewBox="0 0 10 14"><path d="M2.2 2 L7.6 7 L2.2 12" fill="none" stroke="#a4a7ab" stroke-width="1.7"/></svg>
<svg style="position:absolute;left:638.30px;top:814.38px" width="17.4" height="17.4" viewBox="0 0 17.4 17.4"><rect x="0.6" y="0.6" width="16.2" height="16.2" rx="2.2" fill="#3f4446" stroke="#656869" stroke-width="1.1"/></svg>
<span class="t" style="left:638.50px;top:201.88px;line-height:21px;font-size:16.5px;color:#bbbbbb;letter-spacing:-0.037px;">Everywhere</span>
<span class="t" style="left:661.50px;top:227.35px;line-height:21px;font-size:16.5px;color:#bbbbbb;letter-spacing:0.042px;">AspectJ</span>
<span class="t" style="left:661.50px;top:252.82px;line-height:21px;font-size:16.5px;color:#bbbbbb;letter-spacing:0.229px;">CoffeeScript</span>
<span class="t" style="left:661.50px;top:278.29px;line-height:21px;font-size:16.5px;color:#bbbbbb;letter-spacing:-0.896px;">CSS</span>
<span class="t" style="left:661.50px;top:303.76px;line-height:21px;font-size:16.5px;color:#bbbbbb;letter-spacing:-0.005px;">Cucumber feature</span>
<span class="t" style="left:661.50px;top:329.23px;line-height:21px;font-size:16.5px;color:#bbbbbb;letter-spacing:-0.060px;">ECMAScript 6 or higher</span>
<span class="t" style="left:661.50px;top:354.70px;line-height:21px;font-size:16.5px;color:#bbbbbb;letter-spacing:-0.171px;">General .json file</span>
<span class="t" style="left:661.50px;top:380.17px;line-height:21px;font-size:16.5px;color:#bbbbbb;letter-spacing:-0.147px;">General .yaml file</span>
<span class="t" style="left:661.50px;top:405.64px;line-height:21px;font-size:16.5px;color:#bbbbbb;letter-spacing:-0.323px;">Groovy</span>
<span class="t" style="left:661.50px;top:431.11px;line-height:21px;font-size:16.5px;color:#bbbbbb;letter-spacing:-1.203px;">GSP</span>
<span class="t" style="left:661.50px;top:456.58px;line-height:21px;font-size:16.5px;color:#bbbbbb;letter-spacing:-0.254px;">Haml</span>
<span class="t" style="left:661.50px;top:482.05px;line-height:21px;font-size:16.5px;color:#bbbbbb;letter-spacing:-0.230px;">HTML</span>
<span class="t" style="left:661.50px;top:507.52px;line-height:21px;font-size:16.5px;color:#bbbbbb;letter-spacing:-0.257px;">HTTP Request</span>
<span class="t" style="left:661.50px;top:532.99px;line-height:21px;font-size:16.5px;color:#bbbbbb;letter-spacing:0.035px;">Java</span>
<span class="t" style="left:684.75px;top:558.46px;line-height:21px;font-size:16.5px;color:#bbbbbb;letter-spacing:-0.112px;">Comment</span>
<span class="t" style="left:684.75px;top:583.93px;line-height:21px;font-size:16.5px;color:#bbbbbb;letter-spacing:-0.074px;">Consumer function</span>
<span class="t" style="left:684.75px;top:609.40px;line-height:21px;font-size:16.5px;color:#bbbbbb;letter-spacing:-0.020px;">Declaration</span>
<span class="t" style="left:684.75px;top:634.87px;line-height:21px;font-size:16.5px;color:#bbbbbb;letter-spacing:-0.338px;">Expression</span>
<span class="t" style="left:684.75px;top:660.34px;line-height:21px;font-size:16.5px;color:#bbbbbb;letter-spacing:0.100px;">Smart type completion</span>
<span class="t" style="left:684.75px;top:685.81px;line-height:21px;font-size:16.5px;color:#bbbbbb;letter-spacing:-0.024px;">Statement</span>
<span class="t" style="left:684.75px;top:711.28px;line-height:21px;font-size:16.5px;color:#bbbbbb;letter-spacing:0.023px;">string</span>
<span class="t" style="left:684.75px;top:736.75px;line-height:21px;font-size:16.5px;color:#bbbbbb;letter-spacing:-0.106px;">Other</span>
<span class="t" style="left:661.50px;top:762.22px;line-height:21px;font-size:16.5px;color:#bbbbbb;letter-spacing:0.204px;">JavaScript and TypeScript</span>
<span class="t" style="left:661.50px;top:787.69px;line-height:21px;font-size:16.5px;color:#bbbbbb;letter-spacing:-0.191px;">JSON</span>
<span class="t" style="left:661.50px;top:813.16px;line-height:21px;font-size:16.5px;color:#bbbbbb;letter-spacing:-0.505px;">JSP</span>
</div>
<div class="abs" style="left:880.5px;top:196px;width:18px;height:635px;background:#3b3d3f"></div>
<div class="abs" style="left:884px;top:201px;width:10px;height:384px;border-radius:5px;background:#4d4e50"></div>
</body>
</html>
